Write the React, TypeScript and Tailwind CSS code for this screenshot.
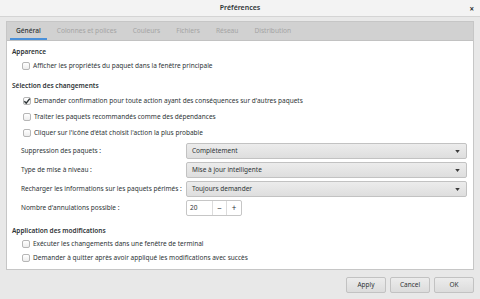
import React from "react";

const font = { fontFamily: '"Noto Sans", "Open Sans", sans-serif' };

function Check({ checked = false }: { checked?: boolean }) {
  return (
    <span className="relative inline-flex w-[8px] h-[8px] shrink-0 rounded-[2px] border border-[#b6b6b6] bg-gradient-to-b from-[#ffffff] to-[#ededed]">
      {checked && (
        <svg viewBox="0 0 8 8" className="absolute left-[-1px] top-[-1px] w-[8px] h-[8px]">
          <path d="M1.3 4.2 L3.2 6.1 L6.8 1.6" fill="none" stroke="#2e3436" strokeWidth="1.4" />
        </svg>
      )}
    </span>
  );
}

function CbRow({ label, checked, className = "" }: { label: string; checked?: boolean; className?: string }) {
  return (
    <div className={"flex items-center h-[14px] gap-[3px] whitespace-nowrap " + className}>
      <Check checked={checked} />
      <span>{label}</span>
    </div>
  );
}

function Combo({ value }: { value: string }) {
  return (
    <div className="flex items-center justify-between w-[281px] h-[16px] rounded-[2px] border border-[#c2c2c2] bg-gradient-to-b from-[#ececec] to-[#dedede] pl-[5px] pr-[6px]">
      <span>{value}</span>
      <svg viewBox="0 0 6 4" className="w-[5px] h-[3px]">
        <path d="M0 0 L6 0 L3 4 Z" fill="#3a3a3a" />
      </svg>
    </div>
  );
}

function FormRow({ label, children, className = "" }: { label: string; children: React.ReactNode; className?: string }) {
  return (
    <div className={"flex items-center h-[16px] " + className}>
      <span className="w-[174px] pl-[9px] shrink-0 whitespace-nowrap">{label}</span>
      {children}
    </div>
  );
}

export default function App() {
  const tabs = ["Général", "Colonnes et polices", "Couleurs", "Fichiers", "Réseau", "Distribution"];
  return (
    <div style={font} className="w-[480px] h-[299px] bg-[#e8e8e8] text-[#2e3436] text-[6.5px] flex flex-col overflow-hidden">
      <div className="relative h-[17px] shrink-0 bg-[#f3f3f3] border-b border-[#d4d4d4] flex items-center justify-center">
        <span className="font-semibold text-[7px] text-[#2e3436]">Préférences</span>
        <span className="absolute right-[6px] top-[3px] text-[8px] font-bold text-[#2e3436]">×</span>
      </div>
      <div className="px-[6px] pt-[4px]">
        <div className="h-[249px] border border-[#c6c6c6] flex flex-col">
          <div className="h-[19px] shrink-0 bg-[#d1d1d1] border-b border-[#c2c2c2] flex items-stretch pl-[1px]">
            {tabs.map((t, i) => (
              <div
                key={t}
                className={
                  "relative flex items-center px-[8px] text-[6.6px] " +
                  (i === 0 ? "text-[#2e3436] font-medium" : "text-[#a4a4a4]")
                }
              >
                <span>{t}</span>
                {i === 0 && <span className="absolute left-[2px] right-[2px] bottom-[0px] h-[2px] bg-[#4a90d9]" />}
              </div>
            ))}
          </div>
          <div className="flex-1 bg-white flex flex-col pt-[4px] pl-[5px]">
            <div className="flex items-center h-[14px] font-semibold">Apparence</div>
            <CbRow className="ml-[10px]" label="Afficher les propriétés du paquet dans la fenêtre principale" />
            <div className="flex items-center h-[14px] font-semibold mt-[6px]">Sélection des changements</div>
            <CbRow className="ml-[11px] mt-[1px]" checked label="Demander confirmation pour toute action ayant des conséquences sur d'autres paquets" />
            <CbRow className="ml-[11px] mt-[2px]" label="Traiter les paquets recommandés comme des dépendances" />
            <CbRow className="ml-[11px] mt-[2px]" label="Cliquer sur l'icône d'état choisit l'action la plus probable" />
            <FormRow className="mt-[3px]" label="Suppression des paquets :">
              <Combo value="Complètement" />
            </FormRow>
            <FormRow className="mt-[3px]" label="Type de mise à niveau :">
              <Combo value="Mise à jour intelligente" />
            </FormRow>
            <FormRow className="mt-[3px]" label="Recharger les informations sur les paquets périmés :">
              <Combo value="Toujours demander" />
            </FormRow>
            <FormRow className="mt-[3px]" label="Nombre d'annulations possible :">
              <div className="flex h-[16px] w-[56px] rounded-[2px] border border-[#c6c6c6] bg-white">
                <span className="w-[25px] flex items-center pl-[3px]">20</span>
                <span className="w-[15px] flex items-center justify-center border-l border-[#dcdcdc] text-[8px]">−</span>
                <span className="w-[15px] flex items-center justify-center border-l border-[#dcdcdc] text-[8px]">+</span>
              </div>
            </FormRow>
            <div className="flex items-center h-[13px] font-semibold mt-[8px]">Application des modifications</div>
            <CbRow className="ml-[10px]" label="Exécuter les changements dans une fenêtre de terminal" />
            <CbRow className="ml-[10px]" label="Demander à quitter après avoir appliqué les modifications avec succès" />
          </div>
        </div>
      </div>
      <div className="flex justify-end gap-[4px] pr-[6px] pt-[7px]">
        {["Apply", "Cancel", "OK"].map((b) => (
          <div
            key={b}
            className="w-[40px] h-[16px] rounded-[2px] border border-[#c2c2c2] bg-gradient-to-b from-[#ececec] to-[#dcdcdc] flex items-center justify-center"
          >
            {b}
          </div>
        ))}
      </div>
    </div>
  );
}
